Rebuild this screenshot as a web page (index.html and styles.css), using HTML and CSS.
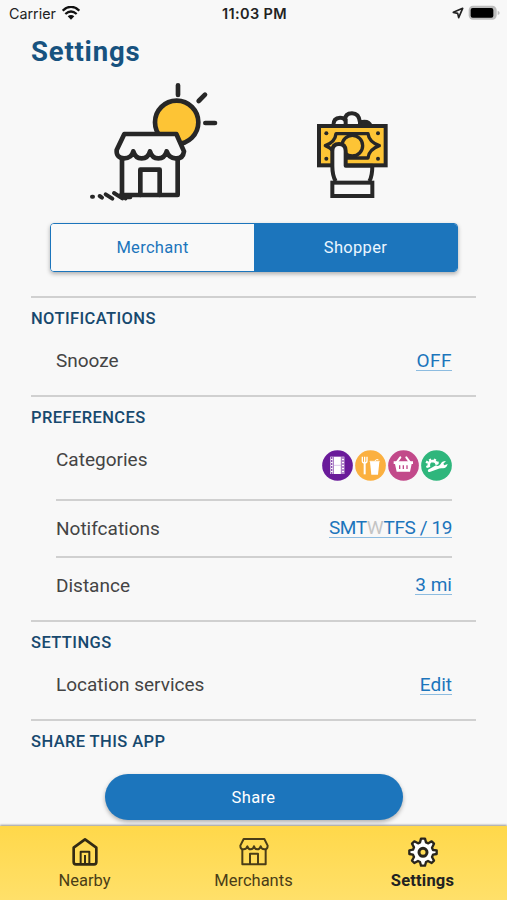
FILE: index.html
```html
<!DOCTYPE html>
<html lang="en">
<head>
    <meta charset="UTF-8">
    <meta name="viewport" content="width=device-width, initial-scale=1.0">
    <title>Settings</title>
    <link rel="stylesheet" href="styles.css">
</head>
<body>
    <div class="status-bar">
        <div class="carrier">
            <span>Carrier</span>
            <svg width="18" height="14" viewBox="0 0 54 42">
                <path d="M2 14 Q27 -9 52 14" fill="none" stroke="#111" stroke-width="7"/>
                <path d="M10 24 Q27 9 44 24" fill="none" stroke="#111" stroke-width="7"/>
                <path d="M17 31 Q27 23 37 31 L27 41 Z" fill="#111"/>
            </svg>
        </div>
        <span class="time">11:03 PM</span>
        <div class="battery">
            <svg width="12" height="12" viewBox="0 0 36 36">
                <path d="M4 16 L32 4 L20 32 L17 19 Z" fill="none" stroke="#222" stroke-width="5" stroke-linejoin="round"/>
            </svg>
            <svg width="32" height="16" viewBox="0 0 96 48">
                <rect x="2" y="2" width="84" height="42" rx="13" fill="#bdbdbd"/>
                <path d="M89 17 Q95 19 95 24 Q95 28 89 30 Z" fill="#bdbdbd"/>
                <rect x="8" y="9" width="68" height="29" rx="6" fill="#000"/>
            </svg>
        </div>
    </div>

    <div class="content">
        <h1>Settings</h1>

        <div class="pictures">
            <svg class="shop" viewBox="0 0 450 405" fill="none" stroke="#272727" stroke-width="14" stroke-linecap="round" stroke-linejoin="round">
                <circle cx="290" cy="142" r="65" fill="#fdc435"/>
                <path d="M294 31 V60 M375 59 L356 78 M376 144 H405"/>
                <path d="M126 240 V360 H293 V240" fill="#f8f8f8"/>
                <path d="M133 177 H289 L312 229 Q309 252 286 250 Q267 250 260 229 Q254 250 235 250 Q216 250 210 229 Q204 250 185 250 Q166 250 160 229 Q155 250 132 250 Q108 249 110 225 Z" fill="#f8f8f8"/>
                <path d="M181 360 V284 H239 V360"/>
                <path d="M36 365 H39 M59 363 L66 368 M77 358 L97 371 M102 354 L127 370 M123 359 L137 370 M144 367 H151" stroke-width="12"/>
            </svg>
            <svg class="hand" viewBox="0 0 330 330" fill="none" stroke="#272727" stroke-width="12" stroke-linejoin="round">
                <path d="M100 77 Q100 53 120 53 Q131 53 135 60 Q135 40 156 40 Q177 40 180 67 Q207 61 212 78" fill="#f8f8f8"/>
                <path d="M137 56 V77 M180 66 V77"/>
                <path d="M182 70 Q207 60 212 77 Z" fill="#272727" stroke="none"/>
                <rect x="57" y="78" width="200" height="118" fill="#fdc435" stroke-linejoin="miter"/>
                <path d="M108 101 H204 Q207 126 238 137 Q207 148 204 174 H108 Q105 148 76 137 Q106 126 108 101 Z" stroke-width="10"/>
                <circle cx="157" cy="137" r="31" stroke-width="10"/>
                <g fill="#272727" stroke="none">
                    <circle cx="79" cy="100" r="6"/>
                    <circle cx="234" cy="100" r="6"/>
                    <circle cx="79" cy="176" r="6"/>
                    <circle cx="234" cy="176" r="6"/>
                </g>
                <path d="M97 198 Q98 228 107 244 H209 Q217 228 217 197 H137 V153 Q137 132 117 132 Q97 132 97 153 Z" fill="#f8f8f8" stroke="none"/>
                <path d="M107 244 Q97 226 97 198 V153 Q97 132 117 132 Q137 132 137 153 V197 H217 Q217 228 208 244"/>
                <rect x="97" y="248" width="120" height="40" fill="#f8f8f8" stroke-linejoin="miter"/>
            </svg>
        </div>

        <div class="switch">
            <button class="option">Merchant</button>
            <button class="option selected">Shopper</button>
        </div>

        <div class="section">
            <h2>Notifications</h2>
            <div class="row">
                <span>Snooze</span>
                <a class="value off">OFF</a>
            </div>
        </div>

        <div class="section">
            <h2>Preferences</h2>
            <div class="row categories">
                <span>Categories</span>
                <div class="category-icons">
                    <svg viewBox="0 0 93 93">
                        <circle cx="46.500" cy="46.500" r="46" fill="#6a1b9a"/>
                        <path d="M25 20 H67 V72 H25 Z" fill="#fff"/>
                        <path d="M34 20 V72 M58 20 V72" stroke="#6a1b9a" stroke-width="2"/>
                        <path d="M29 22 V72 M63 22 V72" stroke="#6a1b9a" stroke-width="4" stroke-dasharray="4 5"/>
                        <path d="M35 46 H57" stroke="#c9a9dd" stroke-width="2"/>
                    </svg>
                    <svg viewBox="0 0 93 93">
                        <circle cx="46.500" cy="46.500" r="46" fill="#fbb040"/>
                        <path d="M22 20 V33 Q22 39 29 39 Q36 39 36 33 V20 M29 20 V38" fill="none" stroke="#fff" stroke-width="4"/>
                        <path d="M29 38 V73" stroke="#fff" stroke-width="6"/>
                        <path d="M45 36 H73 L69 74 H49 Z" fill="#fff"/>
                        <path d="M44 34 H74 M59 33 L64 29 H70" fill="none" stroke="#fff" stroke-width="3"/>
                    </svg>
                    <svg viewBox="0 0 93 93">
                        <circle cx="46.500" cy="46.500" r="46" fill="#c2498a"/>
                        <path d="M26 37 L37 22 M66 37 L55 22" stroke="#fff" stroke-width="6" stroke-linecap="round"/>
                        <path d="M17 34 H75 V42 H71 L66 65 H26 L21 42 H17 Z" fill="#fff"/>
                        <path d="M35 46 V57 M46 46 V57 M57 46 V57" stroke="#c2498a" stroke-width="4"/>
                    </svg>
                    <svg viewBox="0 0 93 93">
                        <circle cx="46.500" cy="46.500" r="46" fill="#2fb67c"/>
                        <path d="M24 52 Q20 34 35 33 Q46 33 48 44" fill="none" stroke="#fff" stroke-width="8"/>
                        <path d="M22 49 L16 51 M21 38 L15 35 M29 33 L26 27 M40 33 L43 27 M47 39 L53 37" stroke="#fff" stroke-width="7"/>
                        <path d="M21 59 L45 46 Q52 51 59 42 Q62 33 75 33 L67 41 L70 46 L80 42 Q76 56 65 55 Q56 54 49 58 L26 66 Q19 66 21 59 Z" fill="#fff"/>
                    </svg>
                </div>
            </div>
            <div class="row days">
                <span>Notifcations</span>
                <a class="value">SMT<span class="off-day">W</span>TFS / 19</a>
            </div>
            <div class="row distance">
                <span>Distance</span>
                <a class="value">3 mi</a>
            </div>
        </div>

        <div class="section">
            <h2>Settings</h2>
            <div class="row">
                <span>Location services</span>
                <a class="value">Edit</a>
            </div>
        </div>

        <div class="section">
            <h2>Share this app</h2>
            <button class="share">Share</button>
        </div>
    </div>

    <div class="tab-bar">
        <div class="tab">
            <svg viewBox="0 0 90 90" fill="none" stroke="#332b14" stroke-width="8" stroke-linejoin="round">
                <path d="M45 7 L79 32 V75 Q79 82 72 82 H18 Q11 82 11 75 V32 Z"/>
                <path d="M32 82 V44 H58 V82 M45 54 V82" stroke-width="6"/>
            </svg>
            <span>Nearby</span>
        </div>
        <div class="tab">
            <svg viewBox="0 0 90 90" fill="none" stroke="#4a3d17" stroke-width="6" stroke-linejoin="round">
                <path d="M14 6 H76 L86 26 Q86 37 76 37 Q67 37 65 28 Q62 37 55 37 Q47 37 45 28 Q43 37 35 37 Q28 37 25 28 Q23 37 14 37 Q4 37 4 26 Z"/>
                <path d="M10 37 V82 H80 V37 M33 82 V50 H57 V82"/>
            </svg>
            <span>Merchants</span>
        </div>
        <div class="tab active">
            <svg viewBox="0 0 90 90" fill="#fff" stroke="#29251c" stroke-width="7" stroke-linejoin="round">
                <path d="M39 5 H51 L54 16 L61 19 L71 13 L78 20 L72 32 L75 39 L86 40 V51 L75 53 L72 60 L78 71 L71 78 L60 72 L54 75 L51 86 H39 L36 75 L30 72 L19 78 L12 71 L18 60 L15 53 L4 51 V40 L15 38 L18 31 L12 20 L19 13 L30 19 L36 16 Z"/>
                <circle cx="45" cy="46" r="12" fill="#ffdc55" stroke-width="9"/>
            </svg>
            <span>Settings</span>
        </div>
    </div>
</body>
</html>
```
FILE: styles.css
```css
* {
    box-sizing: border-box;
}

body {
    margin: 0;
    height: 900px;
    display: flex;
    flex-direction: column;
    overflow: hidden;
    background-color: #f8f8f8;
    color: #444;
    font-family: 'Roboto', sans-serif;
}

.status-bar {
    flex: none;
    display: flex;
    align-items: center;
    justify-content: space-between;
    height: 28px;
    padding: 0 7px 2px 9px;
    color: #222;
    font-family: 'Inter', sans-serif;
    font-size: 14.3px;
}

.carrier,
.battery {
    flex: 1;
    display: flex;
    align-items: center;
    gap: 6px;
}

.battery {
    justify-content: flex-end;
    gap: 4px;
}

.time {
    font-size: 14.5px;
    font-weight: 600;
    letter-spacing: 0.4px;
}

.content {
    flex: 1;
    min-height: 0;
    padding: 0 31px;
}

h1 {
    margin: 6px 0 0;
    height: 36px;
    line-height: 36px;
    font-size: 27.5px;
    font-weight: 700;
    letter-spacing: 0.8px;
    color: #17527f;
}

.pictures {
    display: flex;
    gap: 70px;
    margin-top: 5px;
    padding-left: 49px;
}

.shop {
    width: 150px;
    height: 135px;
}

.hand {
    width: 110px;
    height: 110px;
    margin-top: 25px;
}

.switch {
    display: flex;
    height: 49px;
    margin: 13px 18px 0 19px;
    border: 1px solid #1c75bc;
    border-radius: 4px;
    box-shadow: 0 2px 4px rgba(0, 0, 0, 0.3);
    overflow: hidden;
}

.option {
    flex: 1;
    border: none;
    padding: 0;
    background-color: #f9f9f9;
    color: #1c75bc;
    font-family: inherit;
    font-size: 16.5px;
    letter-spacing: 0.3px;
}

.option.selected {
    background-color: #1c75bc;
    color: #eaf6ff;
}

.section {
    border-top: 2px solid #d0d0d0;
    padding: 10px 0 2px;
}

.switch + .section {
    margin-top: 24px;
}

h2 {
    margin: 0;
    height: 21px;
    line-height: 22px;
    font-size: 16.5px;
    font-weight: 500;
    letter-spacing: 0.4px;
    text-transform: uppercase;
    color: #17496e;
}

.row {
    display: flex;
    align-items: center;
    justify-content: space-between;
    height: 64px;
    margin: 0 24px 0 25px;
    font-size: 19px;
    line-height: 24px;
}

.categories {
    align-items: flex-start;
    height: 73px;
    padding-top: 20px;
    border-bottom: 2px solid #d0d0d0;
}

.category-icons {
    display: flex;
    gap: 2px;
    margin-top: 2px;
}

.category-icons svg {
    width: 31px;
    height: 31px;
}

.days {
    height: 57px;
    border-bottom: 2px solid #d0d0d0;
}

.distance {
    height: 60px;
    padding-bottom: 5px;
}

.value {
    color: #1c75bc;
    line-height: 18px;
    border-bottom: 1px solid #8dbce0;
}

.value.off {
    letter-spacing: 0.5px;
}

.days .value {
    letter-spacing: -0.4px;
}

.off-day {
    color: #c4c4c4;
}

.share {
    display: block;
    width: 298px;
    height: 46px;
    margin: 22px auto 0;
    border: none;
    border-radius: 23px;
    background-color: #1c75bc;
    box-shadow: 0 2px 4px rgba(0, 0, 0, 0.3);
    color: #fff;
    font-family: inherit;
    font-size: 16.5px;
    letter-spacing: 0.4px;
}

.tab-bar {
    position: relative;
    flex: none;
    display: flex;
    height: 74px;
    background: linear-gradient(#ffd84a, #ffe06a);
    box-shadow: 0 -1px 2px rgba(0, 0, 0, 0.4);
    color: #4a3d17;
    font-size: 16.5px;
}

.tab {
    flex: 1;
    display: flex;
    flex-direction: column;
    align-items: center;
    padding-top: 11px;
    line-height: 20px;
}

.tab svg {
    width: 30px;
    height: 30px;
    margin-bottom: 4px;
}

.tab.active {
    color: #222;
    font-weight: 700;
    letter-spacing: 0.2px;
}
```
